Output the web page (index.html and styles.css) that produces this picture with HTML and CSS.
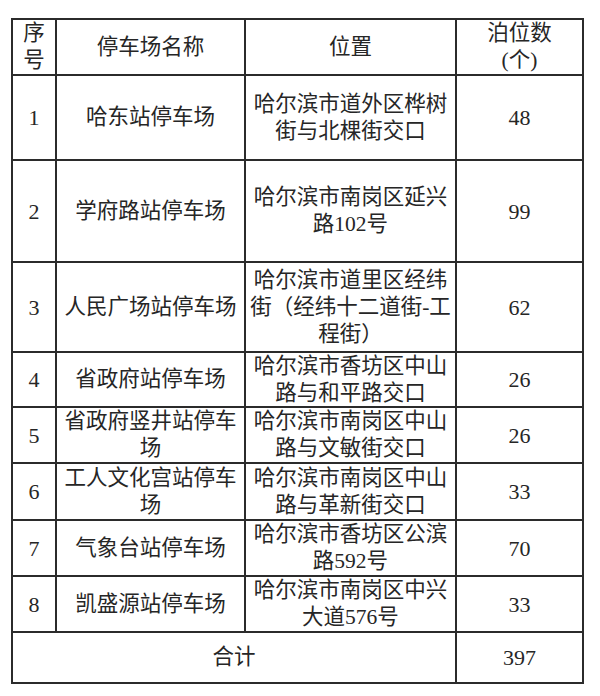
FILE: index.html
```html
<!DOCTYPE html>
<html lang="zh-CN">
<head>
<meta charset="utf-8">
<title>停车场</title>
<link rel="stylesheet" href="styles.css">
</head>
<body>
<div class="sheet">
  <div class="cell">序<br>号</div>
  <div class="cell">停车场名称</div>
  <div class="cell">位置</div>
  <div class="cell">泊位数<br>(个)</div>

  <div class="cell num">1</div>
  <div class="cell">哈东站停车场</div>
  <div class="cell">哈尔滨市道外区桦树<br>街与北棵街交口</div>
  <div class="cell num">48</div>

  <div class="cell num">2</div>
  <div class="cell">学府路站停车场</div>
  <div class="cell">哈尔滨市南岗区延兴<br>路102号</div>
  <div class="cell num">99</div>

  <div class="cell num">3</div>
  <div class="cell">人民广场站停车场</div>
  <div class="cell">哈尔滨市道里区经纬<br>街（经纬十二道街-工<br>程街）</div>
  <div class="cell num">62</div>

  <div class="cell num">4</div>
  <div class="cell">省政府站停车场</div>
  <div class="cell">哈尔滨市香坊区中山<br>路与和平路交口</div>
  <div class="cell num">26</div>

  <div class="cell num">5</div>
  <div class="cell">省政府竖井站停车<br>场</div>
  <div class="cell">哈尔滨市南岗区中山<br>路与文敏街交口</div>
  <div class="cell num">26</div>

  <div class="cell num">6</div>
  <div class="cell">工人文化宫站停车<br>场</div>
  <div class="cell">哈尔滨市南岗区中山<br>路与革新街交口</div>
  <div class="cell num">33</div>

  <div class="cell num">7</div>
  <div class="cell">气象台站停车场</div>
  <div class="cell">哈尔滨市香坊区公滨<br>路592号</div>
  <div class="cell num">70</div>

  <div class="cell num">8</div>
  <div class="cell">凯盛源站停车场</div>
  <div class="cell">哈尔滨市南岗区中兴<br>大道576号</div>
  <div class="cell num">33</div>

  <div class="cell total">合计</div>
  <div class="cell num">397</div>
</div>
</body>
</html>
```

FILE: styles.css
```css
html, body {
  margin: 0;
  padding: 0;
  background: #ffffff;
}

body {
  font-family: "Liberation Serif", "Noto Sans CJK SC", serif;
  color: #262626;
}

.sheet {
  margin: 18px 0 0 11px;
  width: 573px;
  box-sizing: border-box;
  display: grid;
  grid-template-columns: 42px 187px 209px 125px;
  grid-template-rows: 54px 83px 100px 88px 53px 54px 55px 54px 54px 49px;
  gap: 2px;
  padding: 2px;
  background: #2b2b2b;
}

.cell {
  background: #ffffff;
  display: flex;
  align-items: center;
  justify-content: center;
  text-align: center;
  font-size: 21.5px;
  line-height: 27px;
  white-space: nowrap;
  overflow: hidden;
}

.num {
  font-size: 22px;
}

.total {
  grid-column: 1 / 4;
}
```
